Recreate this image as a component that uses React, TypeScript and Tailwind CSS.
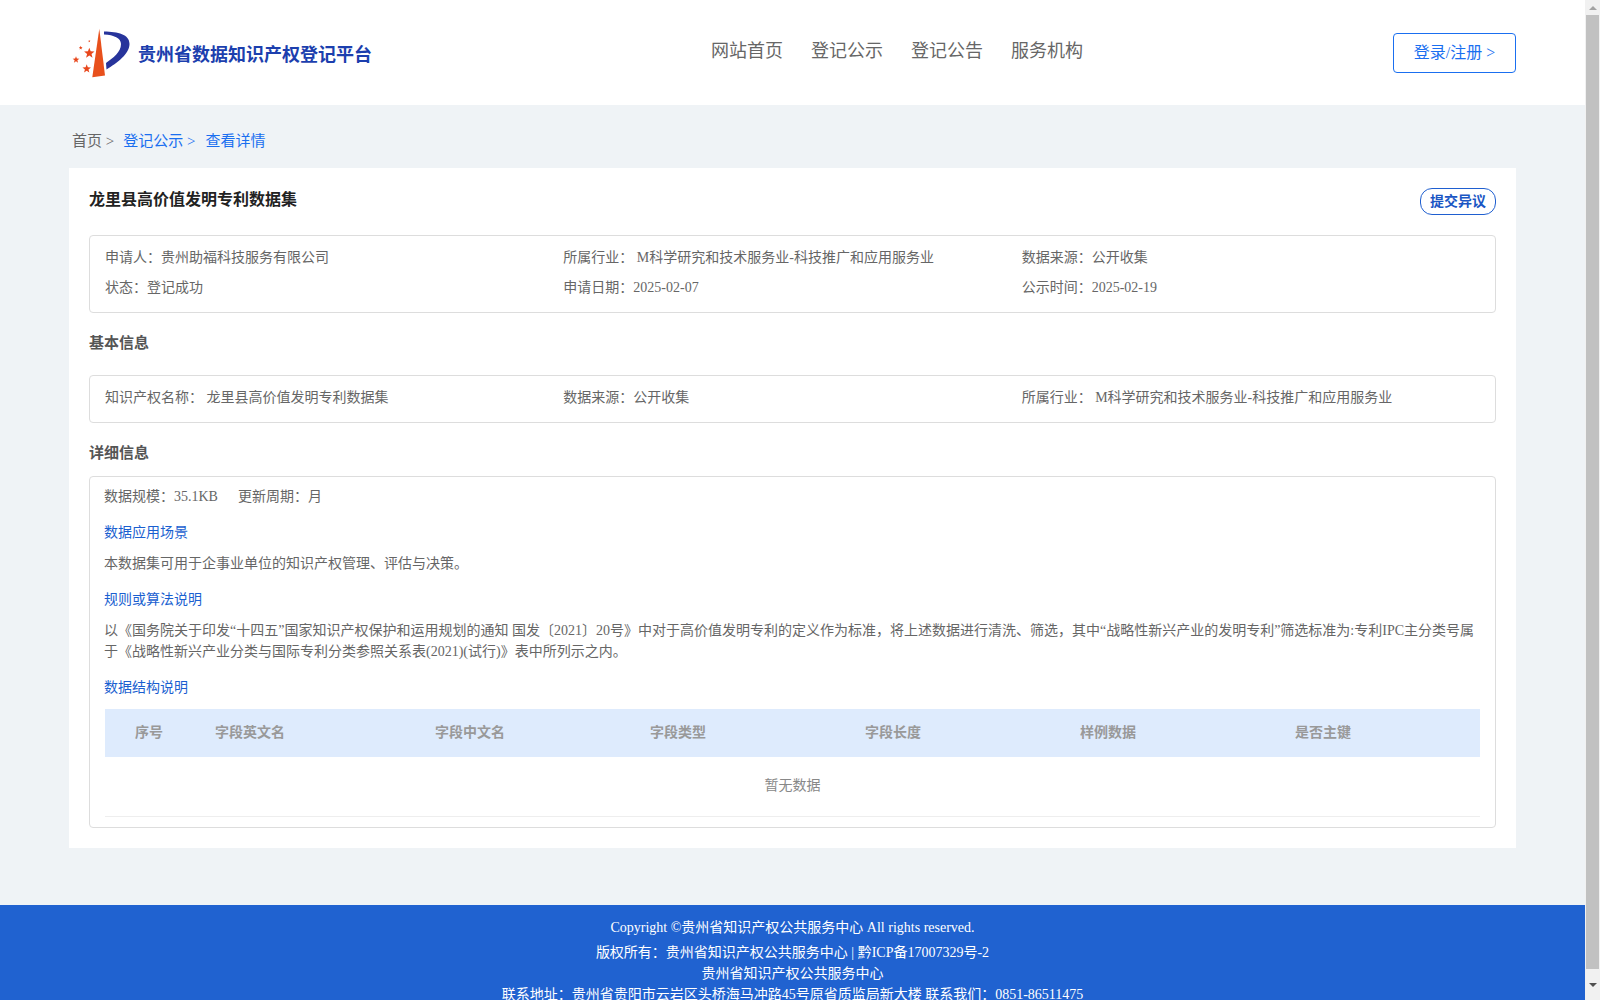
const columns = ["字段英文名", "字段中文名", "字段类型", "字段长度", "样例数据", "是否主键"];

function Star({ x, y, r }: { x: number; y: number; r: number }) {
    const points = Array.from({ length: 10 }, (_, i) => {
        const a = (Math.PI / 5) * i - Math.PI / 2;
        const d = i % 2 === 0 ? r : r * 0.42;
        return `${x + d * Math.cos(a)},${y + d * Math.sin(a)}`;
    }).join(" ");
    return <polygon points={points} fill="#e8471c" />;
}

function Logo() {
    return (
        <svg width="62" height="54" viewBox="0 0 62 54" className="shrink-0">
            <path d="M28.3 2.8 L21.3 51.2 L34 49.5 Z" fill="#e8501c" />
            <path
                d="M33 5.5 C47 6 58.5 8 58.5 18 C58.5 28 46 37 35.5 43.5 L35 37 C42 32 50 26 50 18 C50 12 43 9 33 8.5 Z"
                fill="#27349b"
            />
            <Star x={18.3} y={27.2} r={5.5} />
            <Star x={5} y={33.8} r={3.5} />
            <Star x={15.7} y={42.8} r={4.5} />
            <Star x={9.7} y={21.8} r={2} />
            <Star x={18.3} y={15.2} r={1.3} />
        </svg>
    );
}

function Scrollbar() {
    return (
        <div className="w-[15px] h-[1000px] shrink-0 bg-[#f1f1f1] flex flex-col items-center">
            <div className="h-[15px] flex items-center justify-center">
                <div className="w-0 h-0 border-x-4 border-x-transparent border-b-4 border-b-[#a3a3a3]" />
            </div>
            <div className="w-[13px] h-[954px] bg-[#c1c1c1]" />
            <div className="flex-1 flex items-center justify-center">
                <div className="w-0 h-0 border-x-4 border-x-transparent border-t-4 border-t-[#505050]" />
            </div>
        </div>
    );
}

export default function App() {
    return (
        <div className="flex h-[1000px] w-[1600px] overflow-hidden font-['Liberation_Serif','Noto_Sans_CJK_SC',serif]">
            <div className="w-[1585px] h-[1000px] bg-[#eff3f6] flex flex-col text-[14px] text-[#666]">
                <header className="h-[105px] bg-white flex items-center shrink-0 relative pl-[71px] pr-[69px]">
                    <div className="flex items-center w-[640px]">
                        <Logo />
                        <span className="ml-[5px] mt-[4px] text-[18px] font-bold text-[#1c3fae] leading-none">
                            贵州省数据知识产权登记平台
                        </span>
                    </div>
                    <nav className="flex gap-[28px] text-[18px] text-[#666] -mt-[2px]">
                        <span>网站首页</span>
                        <span>登记公示</span>
                        <span>登记公告</span>
                        <span>服务机构</span>
                    </nav>
                    <button className="ml-auto w-[123px] h-[40px] border border-[#1a6ff0] rounded-[4px] text-[16px] text-[#1a6ff0] bg-white">
                        登录/注册 &gt;
                    </button>
                </header>

                <div className="h-[63px] shrink-0 flex items-center pl-[72px] pt-[9px] text-[15px] text-[#1a6ff0]">
                    <span className="text-[#666]">首页 &gt;</span>
                    <span className="ml-[9px]">登记公示 &gt;</span>
                    <span className="ml-[10px]">查看详情</span>
                </div>

                <main className="ml-[69px] w-[1447px] h-[680px] bg-white px-[20px] shrink-0">
                    <div className="flex justify-between items-start pt-[20px] h-[67px]">
                        <h1 className="text-[16px] font-bold text-[#222] leading-[24px]">龙里县高价值发明专利数据集</h1>
                        <button className="w-[76px] h-[27px] border border-[#1f5fd0] rounded-[12px] text-[14px] font-bold text-[#1a56c4] leading-none">
                            提交异议
                        </button>
                    </div>

                    <div className="h-[78px] border border-[#ddd] rounded-[4px] px-[15px] pt-[6px] grid grid-cols-3 auto-rows-[30px] items-center">
                        <div>申请人：贵州助福科技服务有限公司</div>
                        <div>所属行业： M科学研究和技术服务业-科技推广和应用服务业</div>
                        <div>数据来源：公开收集</div>
                        <div>状态：登记成功</div>
                        <div>申请日期：2025-02-07</div>
                        <div>公示时间：2025-02-19</div>
                    </div>

                    <h2 className="h-[62px] pb-[2px] flex items-center text-[15px] font-bold text-[#555]">基本信息</h2>

                    <div className="h-[48px] border border-[#ddd] rounded-[4px] px-[15px] pb-[4px] grid grid-cols-3 items-center">
                        <div>知识产权名称： 龙里县高价值发明专利数据集</div>
                        <div>数据来源：公开收集</div>
                        <div>所属行业： M科学研究和技术服务业-科技推广和应用服务业</div>
                    </div>

                    <h2 className="h-[53px] pt-[7px] flex items-center text-[15px] font-bold text-[#555]">详细信息</h2>

                    <div className="h-[352px] border border-[#ddd] rounded-[4px] px-[15px]">
                        <div className="h-[38px] flex items-center gap-[20px] -ml-[1px]">
                            <span>数据规模：35.1KB</span>
                            <span>更新周期：月</span>
                        </div>
                        <div className="h-[34px] flex items-center text-[#1a5fd0] -ml-[1px]">数据应用场景</div>
                        <div className="h-[28px] flex items-center -ml-[1px]">本数据集可用于企事业单位的知识产权管理、评估与决策。</div>
                        <div className="h-[42px] pt-[2px] flex items-center text-[#1a5fd0] -ml-[1px]">规则或算法说明</div>
                        <p className="leading-[21px] mt-[1px] -ml-[1px]">
                            以《国务院关于印发“十四五”国家知识产权保护和运用规划的通知 国发〔2021〕20号》中对于高价值发明专利的定义作为标准，将上述数据进行清洗、筛选，其中“战略性新兴产业的发明专利”筛选标准为:专利IPC主分类号属于《战略性新兴产业分类与国际专利分类参照关系表(2021)(试行)》表中所列示之内。
                        </p>
                        <div className="h-[47px] pt-[3px] flex items-center text-[#1a5fd0] -ml-[1px]">数据结构说明</div>
                        <div className="h-[48px] pb-[2px] bg-[#deebfd] grid grid-cols-[81px_220px_215px_215px_215px_215px_1fr] items-center pl-[29px] font-bold text-[#999]">
                            <span className="ml-[1px]">序号</span>
                            {columns.map((c) => (
                                <span key={c}>{c}</span>
                            ))}
                        </div>
                        <div className="h-[60px] pb-[2px] border-b border-[#eee] flex items-center justify-center text-[#888]">
                            暂无数据
                        </div>
                    </div>
                </main>

                <footer className="mt-auto h-[95px] shrink-0 bg-[#2062d0] text-white text-center text-[14px] pt-[13px] overflow-hidden">
                    <div className="leading-[20px]">Copyright ©贵州省知识产权公共服务中心 All rights reserved.</div>
                    <div className="leading-[21px] mt-[4px]">版权所有：贵州省知识产权公共服务中心 | 黔ICP备17007329号-2</div>
                    <div className="leading-[21px]">贵州省知识产权公共服务中心</div>
                    <div className="leading-[21px]">联系地址：贵州省贵阳市云岩区头桥海马冲路45号原省质监局新大楼 联系我们：0851-86511475</div>
                </footer>
            </div>
            <Scrollbar />
        </div>
    );
}
